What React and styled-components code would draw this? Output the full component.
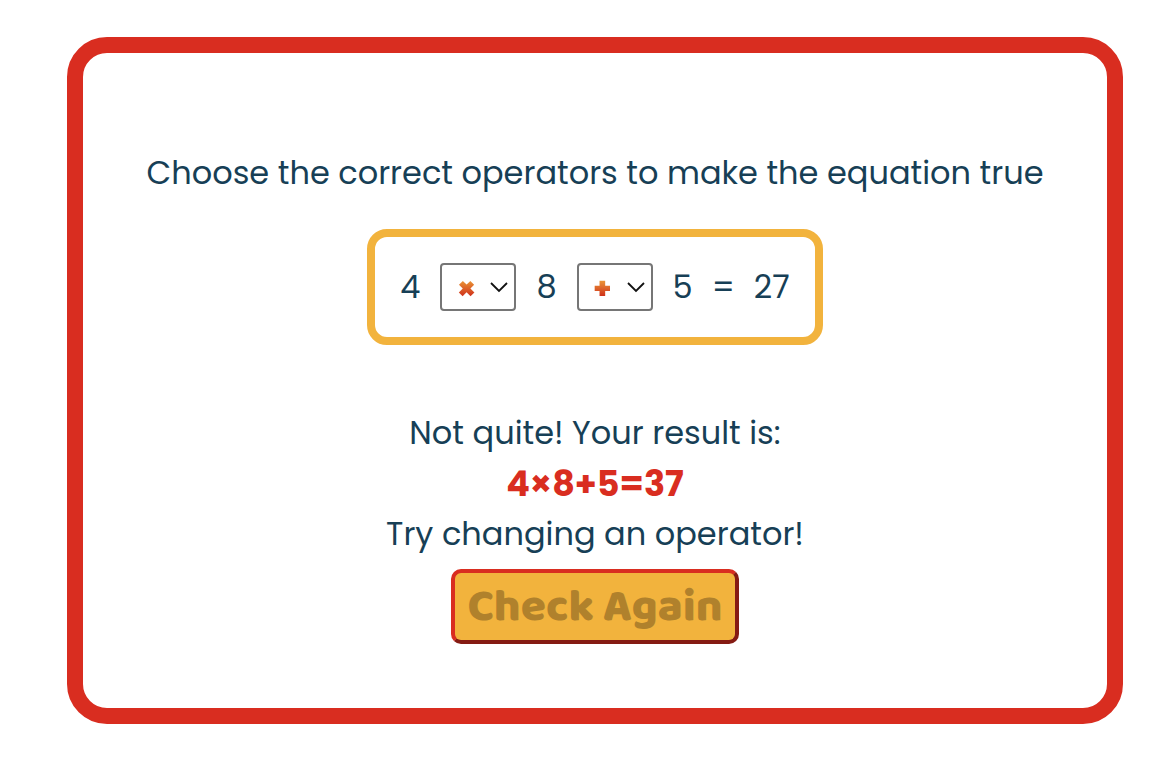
import React, { useState } from "react";
import styled, { createGlobalStyle } from "styled-components";

const GlobalStyle = createGlobalStyle`
  *, *::before, *::after { box-sizing: border-box; }
  body {
    margin: 0;
    background: #ffffff;
    color: #173f56;
    font-family: Poppins, Inter, "Open Sans", sans-serif;
    font-size: 32px;
    line-height: 50px;
  }
`;

const Page = styled.div`
  padding: 37px 53px 40px 67px;
`;

const Card = styled.main`
  display: flex;
  flex-direction: column;
  align-items: center;
  padding: 95px 32px 64px;
  border: 16px solid #d92d20;
  border-radius: 40px;
  text-align: center;
`;

const Prompt = styled.h1`
  margin: 0 0 31px;
  font-size: 32px;
  font-weight: 400;
  line-height: 50px;
`;

const Equation = styled.div`
  display: flex;
  align-items: center;
  gap: 20px;
  padding: 25px;
  border: 8px solid #f2b33d;
  border-radius: 20px;
`;

const RightSide = styled.span`
  display: flex;
  gap: 19px;
`;

const SelectWrap = styled.label`
  display: grid;
  align-items: center;
  border: 2px solid #767676;
  border-radius: 4px;

  > * { grid-area: 1 / 1; }
`;

const Select = styled.select`
  appearance: none;
  width: 72px;
  height: 44px;
  padding: 2px 30px 0 15px;
  border: 0;
  background: linear-gradient(#f2b33d 25%, #cc2418 75%);
  background-clip: text;
  -webkit-background-clip: text;
  color: transparent;
  font-family: inherit;
  font-size: 30px;
  font-weight: 800;

  option { color: #d92d20; }
`;

const Chevron = styled.svg`
  justify-self: end;
  margin-right: 6px;
  pointer-events: none;
`;

const Feedback = styled.section`
  display: flex;
  flex-direction: column;
  align-items: center;
  margin-top: 63px;
`;

const Line = styled.p`
  margin: 0;
`;

const Result = styled.strong`
  padding-top: 1px;
  color: #d92d20;
  font-size: 35px;
  font-weight: 700;
`;

const CheckButton = styled.button`
  margin-top: 10px;
  height: 75px;
  padding: 0 12px;
  border: 4px outset #d92d20;
  border-radius: 10px;
  background: #f2b33d;
  color: #b0812c;
  font-family: "Baloo 2", Lato, sans-serif;
  font-size: 46px;
  font-weight: 800;
  line-height: 60px;
`;

function Operator({ label, initial }) {
  const [value, setValue] = useState(initial);
  return (
    <SelectWrap>
      <Select aria-label={label} value={value} onChange={(e) => setValue(e.target.value)}>
        <option>+</option>
        <option>−</option>
        <option>×</option>
        <option>÷</option>
      </Select>
      <Chevron width="18" height="12" viewBox="0 0 18 12" fill="none" stroke="#111" strokeWidth="1.8">
        <path d="M1 2l8 8 8-8" />
      </Chevron>
    </SelectWrap>
  );
}

export default function App() {
  return (
    <Page>
      <GlobalStyle />
      <Card>
        <Prompt>Choose the correct operators to make the equation true</Prompt>
        <Equation>
          <span>4</span>
          <Operator label="First operator" initial="×" />
          <span>8</span>
          <Operator label="Second operator" initial="+" />
          <RightSide>
            <span>5</span>
            <span>=</span>
            <span>27</span>
          </RightSide>
        </Equation>
        <Feedback>
          <Line>Not quite! Your result is:</Line>
          <Result>4×8+5=37</Result>
          <Line>Try changing an operator!</Line>
          <CheckButton type="button">Check Again</CheckButton>
        </Feedback>
      </Card>
    </Page>
  );
}
